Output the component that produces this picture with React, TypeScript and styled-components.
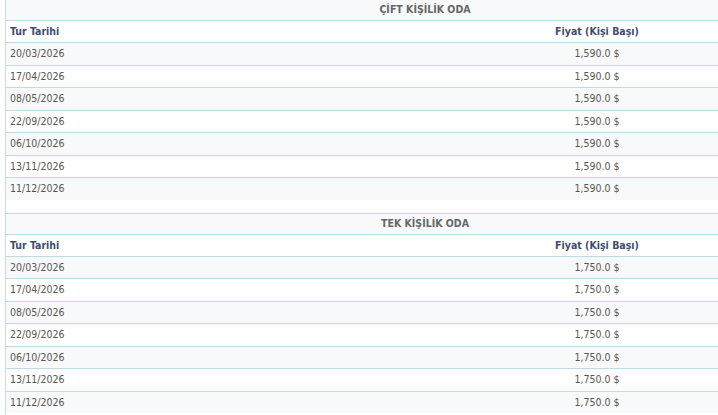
import React from "react";
import styled, { createGlobalStyle } from "styled-components";

const GlobalStyle = createGlobalStyle`
  html, body {
    margin: 0;
    padding: 0;
    overflow: hidden;
    background: #ffffff;
  }
`;

const Page = styled.div`
  margin-top: -1px;
  margin-left: 5px;
  border-left: 1px solid #c6dfe5;
  height: 416px;
  overflow: hidden;
  font-family: "DejaVu Sans Condensed", "DejaVu Sans", Tahoma, sans-serif;
  font-size: 10.5px;
`;

const Table = styled.div`
  width: 838px;
  border-top: 1px solid #bcdbe2;
  & + & {
    margin-top: 13px;
  }
`;

const TitleRow = styled.div`
  height: 20px;
  line-height: 19px;
  background: #f7f9fa;
  border-bottom: 1px solid #bcdbe2;
  text-align: center;
  font-weight: bold;
  color: #666666;
`;

const Row = styled.div<{ $striped?: boolean; $head?: boolean; $last?: boolean }>`
  display: grid;
  grid-template-columns: 344px 1fr;
  box-sizing: border-box;
  height: ${(p) => (p.$head ? "22px" : p.$last ? "21.5px" : "22.5px")};
  padding-bottom: 1px;
  align-items: center;
  background: ${(p) => (p.$striped ? "#f7f9fa" : "#ffffff")};
  border-bottom: ${(p) => (p.$last ? "none" : "1px solid #bcdbe2")};
  color: ${(p) => (p.$head ? "#3e4d6c" : "#5a5550")};
  font-weight: ${(p) => (p.$head ? "bold" : "normal")};
`;

const DateCell = styled.div`
  padding-left: 4px;
`;

const PriceCell = styled.div`
  text-align: center;
`;

const dates = [
  "20/03/2026",
  "17/04/2026",
  "08/05/2026",
  "22/09/2026",
  "06/10/2026",
  "13/11/2026",
  "11/12/2026",
];

const rooms = [
  { title: "ÇİFT KİŞİLİK ODA", price: "1,590.0 $" },
  { title: "TEK KİŞİLİK ODA", price: "1,750.0 $" },
];

const App = () => {
  return (
    <>
      <GlobalStyle />
      <Page>
        {rooms.map((room) => (
          <Table key={room.title}>
            <TitleRow>{room.title}</TitleRow>
            <Row $head>
              <DateCell>Tur Tarihi</DateCell>
              <PriceCell>Fiyat (Kişi Başı)</PriceCell>
            </Row>
            {dates.map((d, i) => (
              <Row key={d} $striped={i % 2 === 0} $last={i === dates.length - 1}>
                <DateCell>{d}</DateCell>
                <PriceCell>{room.price}</PriceCell>
              </Row>
            ))}
          </Table>
        ))}
      </Page>
    </>
  );
};

export default App;
